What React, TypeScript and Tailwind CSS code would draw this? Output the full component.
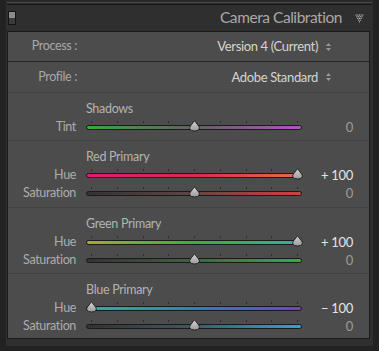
import React from "react";

const FONT = { fontFamily: "Lato, 'Open Sans', 'Liberation Sans', sans-serif" };

type SliderProps = { label: string; value: number; display: string; bright?: boolean; track: string };

function Thumb({ left }: { left: number }) {
  return (
    <svg
      className="absolute top-[2px]"
      style={{ left }}
      width="11"
      height="12"
      viewBox="0 0 11 12"
    >
      <defs>
        <linearGradient id="tg" x1="0" y1="0" x2="0" y2="1">
          <stop offset="0" stopColor="#d4d4d4" />
          <stop offset="1" stopColor="#9a9a9a" />
        </linearGradient>
      </defs>
      <path
        d="M5.5 0.8 L9.6 6 Q10.6 7.4 10.2 8.8 Q9.4 11 5.5 11 Q1.6 11 0.8 8.8 Q0.4 7.4 1.4 6 Z"
        fill="url(#tg)"
        stroke="#1b1b1b"
        strokeWidth="0.9"
      />
    </svg>
  );
}

function Slider({ label, value, display, bright, track }: SliderProps) {
  const pos = 5 + ((value + 100) / 200) * 206;
  const ticks = Array.from({ length: 9 }, (_, k) => 5 + k * 25.75);
  return (
    <div className="flex h-[18px] items-center">
      <div className="w-[68px] text-right text-[12.5px] leading-none tracking-[-0.35px] text-[#adadad]">
        {label}
      </div>
      <div className="relative ml-[10px] flex h-[18px] w-[216px] items-center">
        {ticks.map((t, i) => (
          <div
            key={i}
            className="absolute top-[3px] h-[2px] w-[1px] bg-[#2c2c2c]"
            style={{ left: Math.round(t) }}
          />
        ))}
        <div className={`h-[5px] w-full rounded-full border border-[#1a1a1a] ${track}`} />
        <Thumb left={Math.round(pos - 5.5)} />
      </div>
      <div
        className={`w-[51px] text-right text-[13px] leading-none tracking-[-0.3px] ${bright ? "text-[#e4e4e4]" : "text-[#9c9c9c]"}`}
      >
        {display}
      </div>
    </div>
  );
}

function UpDown() {
  return (
    <svg width="7" height="10" viewBox="0 0 7 10" className="ml-[7px]">
      <path d="M3.5 1 L6 4 L1 4 Z" fill="#9a9a9a" />
      <path d="M3.5 9 L6 6 L1 6 Z" fill="#9a9a9a" />
    </svg>
  );
}

function Section({ title, children, pb }: { title: string; children: React.ReactNode; pb: string }) {
  return (
    <div className={`border-t border-[#424242] pt-[8px] ${pb}`}>
      <div className="flex h-[17px] items-center pl-[78px] text-[12.5px] leading-none tracking-[-0.3px] text-[#b3b3b3]">
        {title}
      </div>
      {children}
    </div>
  );
}

function Tri() {
  const dots: [number, number][] = [];
  const rows = [5, 4, 3, 2, 1];
  rows.forEach((n, r) => {
    for (let i = 0; i < n; i++) {
      dots.push([r * 0.85 + i * 1.7 + 0.5, r * 1.7 + 0.5]);
    }
  });
  return (
    <svg width="9" height="9" viewBox="0 0 9 9">
      {dots.map(([x, y], i) => (
        <rect key={i} x={x} y={y} width="1.1" height="1.1" fill="#bdbdbd" />
      ))}
    </svg>
  );
}

export default function App() {
  return (
    <div className="h-[351px] w-[379px] overflow-hidden bg-[#222222]" style={FONT}>
      <div className="ml-[6px] mr-[6px] flex h-[346px] flex-col bg-[#2f2f2f]">
        <div className="mx-[1px] h-[5px] border-b border-[#151515] bg-[#2a2a2a]">
          <div className="mt-[2px] h-[1px] bg-[#4a4a4a]" />
        </div>
        <div className="flex h-[26px] items-center">
          <div className="ml-[2px] flex h-[14px] w-[8px] flex-col border border-[#141414]">
            <div className="h-[6px] bg-[#8c8c8c]" />
            <div className="flex-1 bg-[#3a3a3a]" />
          </div>
          <div className="flex-1 pr-[13px] text-right text-[15.5px] leading-none tracking-[-0.45px] text-[#a9a9a9]">
            Camera Calibration
          </div>
          <div className="mr-[9px] flex items-center">
            <Tri />
          </div>
        </div>
        <div className="ml-[1px] mr-[3px] border border-[#1a1a1a] bg-[#4c4c4c]">
          <div className="flex h-[30px] items-center border-b border-[#242424]">
            <div className="w-[69px] text-right text-[12.5px] leading-none tracking-[-0.35px] text-[#a8a8a8]">
              Process :
            </div>
            <div className="flex flex-1 items-center justify-end pr-[37px] text-[13px] leading-none tracking-[-0.35px] text-[#d4d4d4]">
              Version 4 (Current)
              <UpDown />
            </div>
          </div>
          <div className="flex h-[30px] items-center">
            <div className="w-[69px] text-right text-[12.5px] leading-none tracking-[-0.35px] text-[#a8a8a8]">
              Profile :
            </div>
            <div className="flex flex-1 items-center justify-end pr-[37px] text-[13px] leading-none tracking-[-0.35px] text-[#d4d4d4]">
              Adobe Standard
              <UpDown />
            </div>
          </div>
          <Section title="Shadows" pb="pb-[4px]">
            <Slider
              label="Tint"
              value={0}
              display="0"
              track="bg-[linear-gradient(to_right,#3aa83a,#5c6a5c_45%,#6e5c70_55%,#b352c4)]"
            />
          </Section>
          <Section title="Red Primary" pb="pb-[5px]">
            <Slider
              label="Hue"
              value={100}
              display="+ 100"
              bright
              track="bg-[linear-gradient(to_right,#e0187a,#dc2a48_50%,#e07040)]"
            />
            <Slider
              label="Saturation"
              value={0}
              display="0"
              track="bg-[linear-gradient(to_right,#333333,#5a4444_45%,#d04040)]"
            />
          </Section>
          <Section title="Green Primary" pb="pb-[4px]">
            <Slider
              label="Hue"
              value={100}
              display="+ 100"
              bright
              track="bg-[linear-gradient(to_right,#a8a830,#38b038_50%,#30b0a0)]"
            />
            <Slider
              label="Saturation"
              value={0}
              display="0"
              track="bg-[linear-gradient(to_right,#333333,#445a44_45%,#30b048)]"
            />
          </Section>
          <Section title="Blue Primary" pb="pb-[3px]">
            <Slider
              label="Hue"
              value={-100}
              display="− 100"
              bright
              track="bg-[linear-gradient(to_right,#30b09a,#2e7cc0_55%,#7440c8)]"
            />
            <Slider
              label="Saturation"
              value={0}
              display="0"
              track="bg-[linear-gradient(to_right,#333333,#3e5460_45%,#2ea8c8)]"
            />
          </Section>
        </div>
      </div>
    </div>
  );
}
